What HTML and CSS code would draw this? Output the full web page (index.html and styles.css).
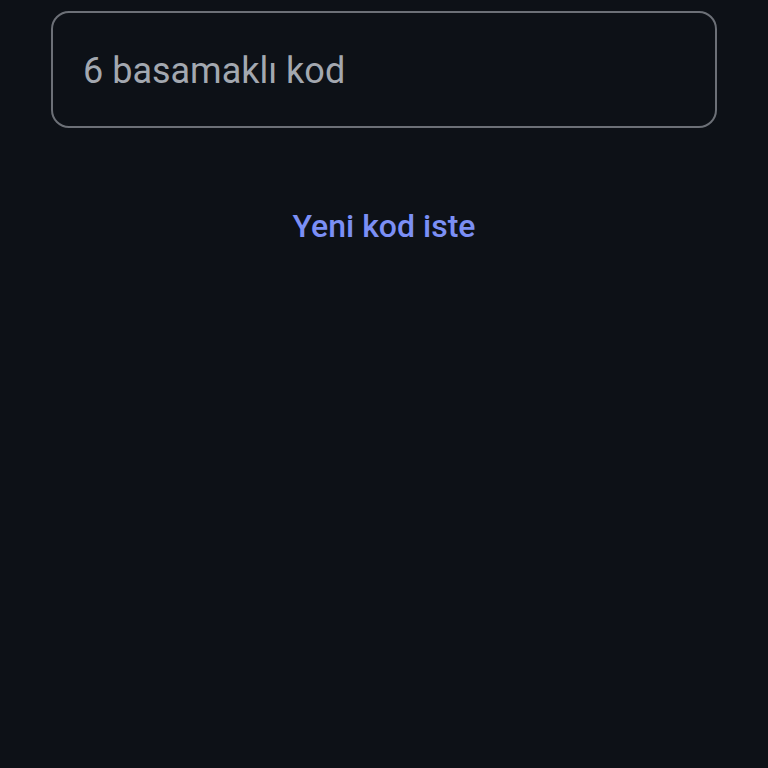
FILE: index.html
```html
<!DOCTYPE html>
<html lang="tr">
<head>
<meta charset="utf-8">
<link rel="stylesheet" href="styles.css">
</head>
<body>
<main class="screen">
  <div class="field">
    <span class="placeholder">6 basamaklı kod</span>
  </div>
  <div class="actions">
    <a class="resend" href="#">Yeni kod iste</a>
  </div>
</main>
</body>
</html>
```

FILE: styles.css
```css
html, body {
  margin: 0;
  padding: 0;
  background: #0d1117;
  height: 100%;
}
.screen {
  padding: 11px 51px 0 51px;
  font-family: Roboto, "Noto Sans", sans-serif;
}
.field {
  box-sizing: border-box;
  height: 117px;
  border: 2px solid #6c7077;
  border-radius: 18px;
  display: flex;
  align-items: center;
  padding-left: 30px;
  padding-top: 2px;
}
.placeholder {
  color: #a3a8b0;
  font-size: 36px;
}
.actions {
  display: flex;
  justify-content: center;
  padding-top: 79px;
}
.resend {
  color: #7b8ff5;
  font-size: 32px;
  font-weight: 500;
  text-decoration: none;
}
```
